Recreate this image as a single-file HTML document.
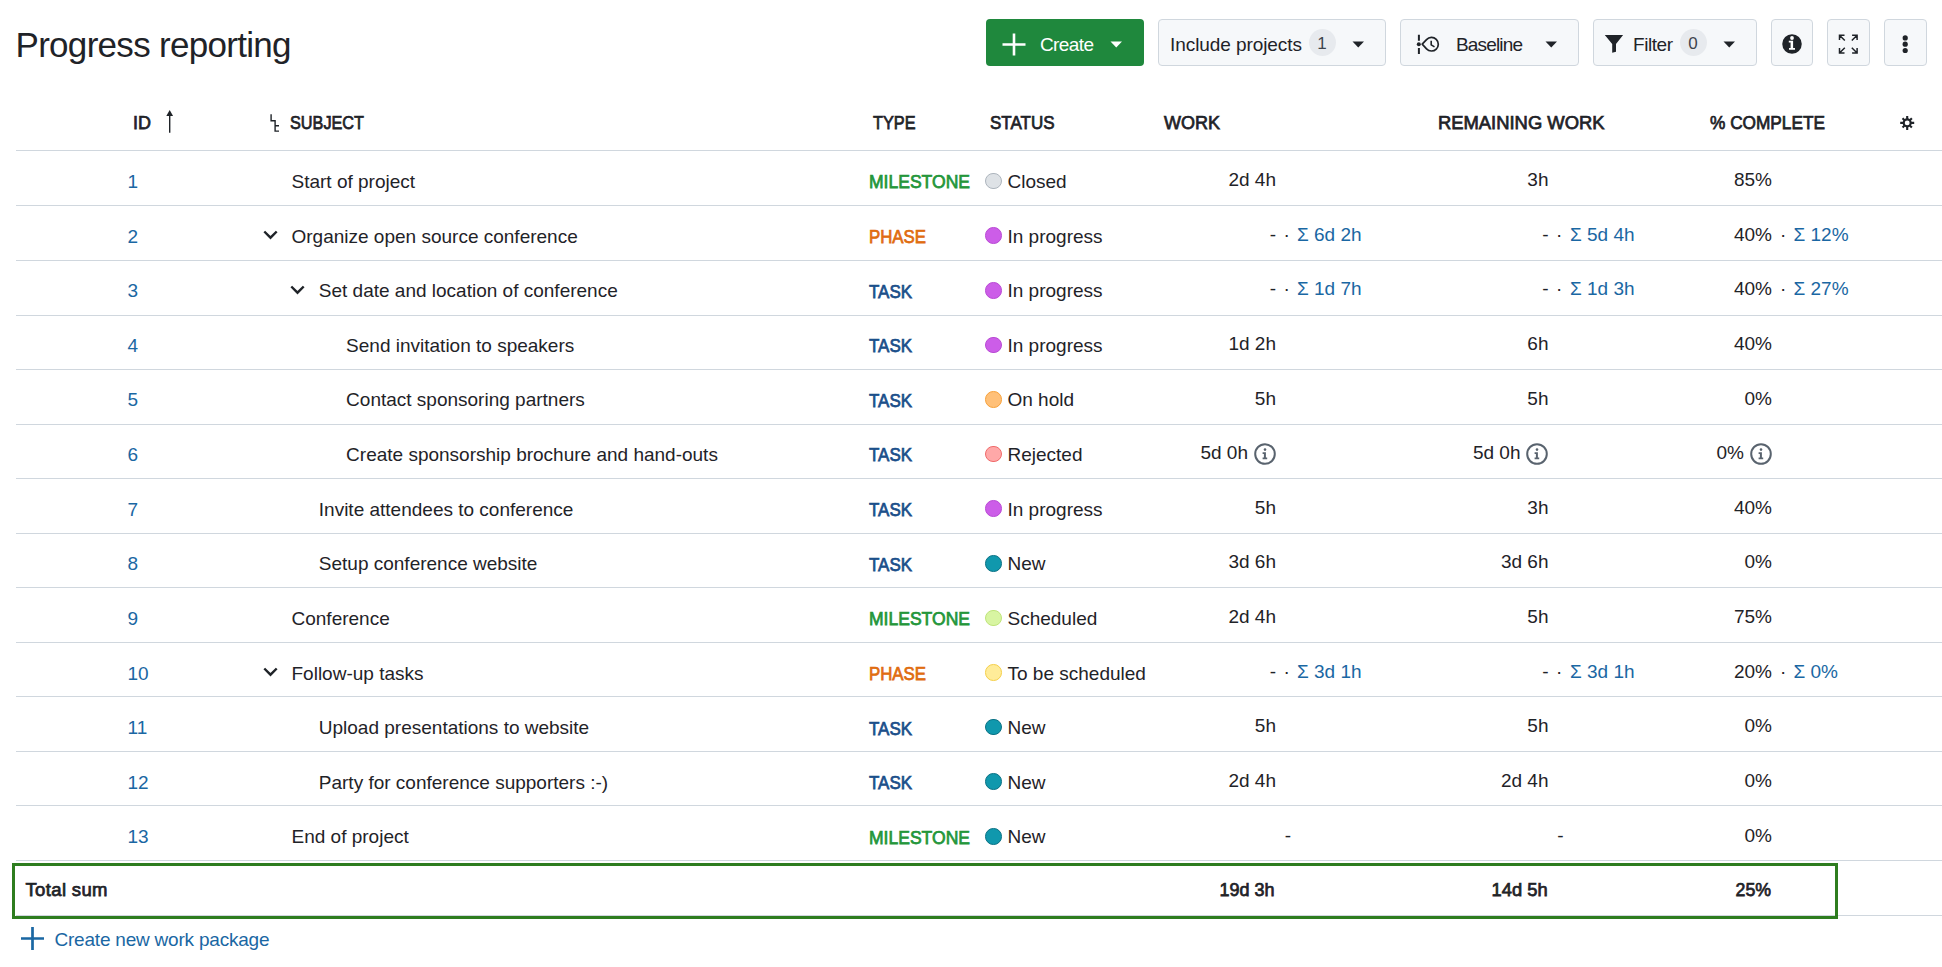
<!DOCTYPE html>
<html><head><meta charset="utf-8"><title>Progress reporting</title>
<style>
html,body{margin:0;padding:0;background:#fff;}
body{width:1942px;height:967px;position:relative;overflow:hidden;font-family:"Liberation Sans",sans-serif;color:#1f2328;}
.t{position:absolute;white-space:nowrap;}
svg{display:block;}
</style></head><body>
<div class="t" style="top:27.37px;font-size:35px;line-height:35px;color:#1f2328;letter-spacing:-0.701px;left:15.50px;">Progress reporting</div>
<div style="position:absolute;left:986px;top:19px;width:158px;height:47px;background:#1f883d;border-radius:4px;"></div>
<svg style="position:absolute;left:1002px;top:33px" width="24" height="23" viewBox="0 0 24 23"><path d="M12 0.5V22.5M0.5 11.5H23.5" stroke="#fff" stroke-width="2.6"/></svg>
<div class="t" style="top:35.41px;font-size:19px;line-height:19px;color:#fff;letter-spacing:-0.606px;left:1040.00px;">Create</div>
<svg style="position:absolute;left:1110px;top:41px" width="13" height="7" viewBox="0 0 13 7"><path d="M0.5 0.6H12L6.25 6.6Z" fill="#fff"/></svg>
<div style="position:absolute;left:1158px;top:19px;width:228px;height:47px;box-sizing:border-box;background:#f6f8fa;border:1.3px solid #d0d7de;border-radius:4px;"></div>
<div class="t" style="top:35.41px;font-size:19px;line-height:19px;color:#1f2328;letter-spacing:-0.072px;left:1170.00px;">Include projects</div>
<div style="position:absolute;left:1308.5px;top:29.0px;width:27px;height:27px;background:#e7eaee;border-radius:50%;"></div>
<div class="t" style="top:35.11px;font-size:17px;line-height:17px;color:#3d444d;left:1317.20px;">1</div>
<svg style="position:absolute;left:1352px;top:41px" width="13" height="7" viewBox="0 0 13 7"><path d="M0.5 0.6H12L6.25 6.6Z" fill="#1f2328"/></svg>
<div style="position:absolute;left:1400px;top:19px;width:179px;height:47px;box-sizing:border-box;background:#f6f8fa;border:1.3px solid #d0d7de;border-radius:4px;"></div>
<svg style="position:absolute;left:1410px;top:28px" width="35" height="32" viewBox="0 0 35 32" ><path d="M8.9 6.8V12.7M8.9 20V26" stroke="#1f2328" stroke-width="2"/><circle cx="8.8" cy="16.2" r="2" fill="#1f2328"/><path d="M12.2 16.2L16.53 11.56A6.8 6.8 0 1 1 16.53 20.84Z" fill="none" stroke="#1f2328" stroke-width="1.7" stroke-linejoin="round"/><path d="M21.2 12.7V16.9L24.5 18.9" fill="none" stroke="#1f2328" stroke-width="1.6"/></svg>
<div class="t" style="top:35.41px;font-size:19px;line-height:19px;color:#1f2328;letter-spacing:-0.841px;left:1456.00px;">Baseline</div>
<svg style="position:absolute;left:1545px;top:41px" width="13" height="7" viewBox="0 0 13 7"><path d="M0.5 0.6H12L6.25 6.6Z" fill="#1f2328"/></svg>
<div style="position:absolute;left:1593px;top:19px;width:164px;height:47px;box-sizing:border-box;background:#f6f8fa;border:1.3px solid #d0d7de;border-radius:4px;"></div>
<svg style="position:absolute;left:1598px;top:28px" width="35" height="32" viewBox="0 0 35 32" ><path d="M6.8 6.9H25.1L18 15.9V23.7L14.2 24.8V15.9Z" fill="#1f2328"/></svg>
<div class="t" style="top:35.41px;font-size:19px;line-height:19px;color:#1f2328;letter-spacing:-0.444px;left:1633.00px;">Filter</div>
<div style="position:absolute;left:1679.5px;top:29.0px;width:27px;height:27px;background:#e7eaee;border-radius:50%;"></div>
<div class="t" style="top:35.11px;font-size:17px;line-height:17px;color:#3d444d;left:1688.20px;">0</div>
<svg style="position:absolute;left:1723px;top:41px" width="13" height="7" viewBox="0 0 13 7"><path d="M0.5 0.6H12L6.25 6.6Z" fill="#1f2328"/></svg>
<div style="position:absolute;left:1771px;top:19px;width:42px;height:47px;box-sizing:border-box;background:#f6f8fa;border:1.3px solid #d0d7de;border-radius:4px;"></div>
<svg style="position:absolute;left:1776px;top:28px" width="32" height="32" viewBox="0 0 32 32" ><circle cx="16" cy="16" r="9.75" fill="#1f2328"/><circle cx="16" cy="10" r="1.9" fill="#fff"/><path d="M12.8 12.7H17.1V19.9H19V21.8H13V19.9H14.6V14.4H12.8Z" fill="#fff"/></svg>
<div style="position:absolute;left:1827px;top:19px;width:43px;height:47px;box-sizing:border-box;background:#f6f8fa;border:1.3px solid #d0d7de;border-radius:4px;"></div>
<svg style="position:absolute;left:1776px;top:28px" width="90" height="32" viewBox="0 0 90 32" ><path d="M63.5 12V7.2H68.5M63.5 7.2L68.8 12.5M81.1 12V7.2H76.1M81.1 7.2L75.8 12.5M63.5 20V25H68.5M63.5 25L68.8 19.7M81.1 20V25H76.1M81.1 25L75.8 19.7" fill="none" stroke="#1f2328" stroke-width="1.5"/></svg>
<div style="position:absolute;left:1884px;top:19px;width:43px;height:47px;box-sizing:border-box;background:#f6f8fa;border:1.3px solid #d0d7de;border-radius:4px;"></div>
<svg style="position:absolute;left:1890px;top:28px" width="30" height="32" viewBox="0 0 30 32" ><circle cx="15.2" cy="9.9" r="2.6" fill="#1f2328"/><circle cx="15.2" cy="16.2" r="2.6" fill="#1f2328"/><circle cx="15.2" cy="22.5" r="2.6" fill="#1f2328"/></svg>
<div class="t" style="top:114.34px;font-size:18.5px;line-height:18.5px;color:#1f2328;-webkit-text-stroke:0.75px #1f2328;transform:scaleX(0.9730);transform-origin:0 0;left:133.00px;">ID</div>
<svg style="position:absolute;left:160px;top:105px" width="20" height="30" viewBox="0 0 20 30" ><path d="M9.7 10V27.8" stroke="#1f2328" stroke-width="1.4"/><path d="M6.3 11L9.7 5L13.1 11Z" fill="#1f2328"/></svg>
<svg style="position:absolute;left:260px;top:110px" width="30" height="25" viewBox="0 0 30 25" ><path d="M11.1 4.2V10.7H15.1V21.1H19M15.1 15.7H19" fill="none" stroke="#1f2328" stroke-width="1.4"/></svg>
<div class="t" style="top:114.34px;font-size:18.5px;line-height:18.5px;color:#1f2328;-webkit-text-stroke:0.75px #1f2328;transform:scaleX(0.8779);transform-origin:0 0;left:289.50px;">SUBJECT</div>
<div class="t" style="top:114.34px;font-size:18.5px;line-height:18.5px;color:#1f2328;-webkit-text-stroke:0.75px #1f2328;transform:scaleX(0.8796);transform-origin:0 0;left:873.00px;">TYPE</div>
<div class="t" style="top:114.34px;font-size:18.5px;line-height:18.5px;color:#1f2328;-webkit-text-stroke:0.75px #1f2328;transform:scaleX(0.9184);transform-origin:0 0;left:990.00px;">STATUS</div>
<div class="t" style="top:114.34px;font-size:18.5px;line-height:18.5px;color:#1f2328;-webkit-text-stroke:0.75px #1f2328;transform:scaleX(0.9731);transform-origin:0 0;left:1164.00px;">WORK</div>
<div class="t" style="top:114.34px;font-size:18.5px;line-height:18.5px;color:#1f2328;-webkit-text-stroke:0.75px #1f2328;transform:scaleX(0.9939);transform-origin:0 0;left:1437.50px;">REMAINING WORK</div>
<div class="t" style="top:114.34px;font-size:18.5px;line-height:18.5px;color:#1f2328;-webkit-text-stroke:0.75px #1f2328;transform:scaleX(0.9323);transform-origin:0 0;left:1710.00px;">% COMPLETE</div>
<svg style="position:absolute;left:1892px;top:108px" width="30" height="30" viewBox="0 0 30 30" ><circle cx="15.2" cy="14.9" r="3.5" fill="none" stroke="#1f2328" stroke-width="2.1"/><path d="M18.70 14.90L22.20 14.90M17.67 17.37L19.87 19.57M15.20 18.40L15.20 21.90M12.73 17.37L10.53 19.57M11.70 14.90L8.20 14.90M12.73 12.43L10.53 10.23M15.20 11.40L15.20 7.90M17.67 12.43L19.87 10.23" stroke="#1f2328" stroke-width="2.1"/></svg>
<div style="position:absolute;left:16px;top:150px;width:1926px;height:1px;background:#d0d7de;"></div>
<div class="t" style="top:171.96px;font-size:19px;line-height:19px;color:#1a67a3;left:127.50px;">1</div>
<div class="t" style="top:171.96px;font-size:19px;line-height:19px;color:#1f2328;left:291.50px;">Start of project</div>
<div class="t" style="top:173.39px;font-size:18.5px;line-height:18.5px;color:#24963a;-webkit-text-stroke:0.75px #24963a;transform:scaleX(0.9477);transform-origin:0 0;left:869.00px;">MILESTONE</div>
<div style="position:absolute;left:985px;top:172.70000000000002px;width:16.6px;height:16.6px;box-sizing:border-box;background:#dee2e6;border:1.3px solid #adb5bd;border-radius:50%;"></div>
<div class="t" style="top:171.96px;font-size:19px;line-height:19px;color:#1f2328;left:1007.50px;">Closed</div>
<div class="t" style="top:170.16px;font-size:19px;line-height:19px;color:#1f2328;right:666.00px;">2d 4h</div>
<div class="t" style="top:170.16px;font-size:19px;line-height:19px;color:#1f2328;right:393.50px;">3h</div>
<div class="t" style="top:170.16px;font-size:19px;line-height:19px;color:#1f2328;right:170.00px;">85%</div>
<div style="position:absolute;left:16px;top:205px;width:1926px;height:1px;background:#d0d7de;"></div>
<div class="t" style="top:226.58px;font-size:19px;line-height:19px;color:#1a67a3;left:127.50px;">2</div>
<svg style="position:absolute;left:262.5px;top:230.01500000000001px" width="15" height="10" viewBox="0 0 15 10"><path d="M1.3 1.5L7.5 7.7L13.7 1.5" fill="none" stroke="#1f2328" stroke-width="2.4"/></svg>
<div class="t" style="top:226.58px;font-size:19px;line-height:19px;color:#1f2328;left:291.50px;">Organize open source conference</div>
<div class="t" style="top:228.00px;font-size:18.5px;line-height:18.5px;color:#e06c10;-webkit-text-stroke:0.75px #e06c10;transform:scaleX(0.9089);transform-origin:0 0;left:869.00px;">PHASE</div>
<div style="position:absolute;left:985px;top:227.31500000000003px;width:16.6px;height:16.6px;box-sizing:border-box;background:#cc5de8;border:1.3px solid #b94ad4;border-radius:50%;"></div>
<div class="t" style="top:226.58px;font-size:19px;line-height:19px;color:#1f2328;left:1007.50px;">In progress</div>
<div class="t" style="top:224.78px;font-size:19px;line-height:19px;color:#1f2328;right:666.00px;">-</div>
<div class="t" style="top:224.78px;font-size:19px;line-height:19px;color:#1f2328;left:1283.50px;">·</div>
<div class="t" style="top:224.78px;font-size:19px;line-height:19px;color:#1a67a3;left:1297.00px;">Σ 6d 2h</div>
<div class="t" style="top:224.78px;font-size:19px;line-height:19px;color:#1f2328;right:393.50px;">-</div>
<div class="t" style="top:224.78px;font-size:19px;line-height:19px;color:#1f2328;left:1556.00px;">·</div>
<div class="t" style="top:224.78px;font-size:19px;line-height:19px;color:#1a67a3;left:1570.00px;">Σ 5d 4h</div>
<div class="t" style="top:224.78px;font-size:19px;line-height:19px;color:#1f2328;right:170.00px;">40%</div>
<div class="t" style="top:224.78px;font-size:19px;line-height:19px;color:#1f2328;left:1780.00px;">·</div>
<div class="t" style="top:224.78px;font-size:19px;line-height:19px;color:#1a67a3;left:1793.50px;">Σ 12%</div>
<div style="position:absolute;left:16px;top:260px;width:1926px;height:1px;background:#d0d7de;"></div>
<div class="t" style="top:281.19px;font-size:19px;line-height:19px;color:#1a67a3;left:127.50px;">3</div>
<svg style="position:absolute;left:289.8px;top:284.63px" width="15" height="10" viewBox="0 0 15 10"><path d="M1.3 1.5L7.5 7.7L13.7 1.5" fill="none" stroke="#1f2328" stroke-width="2.4"/></svg>
<div class="t" style="top:281.19px;font-size:19px;line-height:19px;color:#1f2328;left:318.80px;">Set date and location of conference</div>
<div class="t" style="top:282.62px;font-size:18.5px;line-height:18.5px;color:#1b4f8a;-webkit-text-stroke:0.75px #1b4f8a;transform:scaleX(0.9160);transform-origin:0 0;left:869.00px;">TASK</div>
<div style="position:absolute;left:985px;top:281.93px;width:16.6px;height:16.6px;box-sizing:border-box;background:#cc5de8;border:1.3px solid #b94ad4;border-radius:50%;"></div>
<div class="t" style="top:281.19px;font-size:19px;line-height:19px;color:#1f2328;left:1007.50px;">In progress</div>
<div class="t" style="top:279.39px;font-size:19px;line-height:19px;color:#1f2328;right:666.00px;">-</div>
<div class="t" style="top:279.39px;font-size:19px;line-height:19px;color:#1f2328;left:1283.50px;">·</div>
<div class="t" style="top:279.39px;font-size:19px;line-height:19px;color:#1a67a3;left:1297.00px;">Σ 1d 7h</div>
<div class="t" style="top:279.39px;font-size:19px;line-height:19px;color:#1f2328;right:393.50px;">-</div>
<div class="t" style="top:279.39px;font-size:19px;line-height:19px;color:#1f2328;left:1556.00px;">·</div>
<div class="t" style="top:279.39px;font-size:19px;line-height:19px;color:#1a67a3;left:1570.00px;">Σ 1d 3h</div>
<div class="t" style="top:279.39px;font-size:19px;line-height:19px;color:#1f2328;right:170.00px;">40%</div>
<div class="t" style="top:279.39px;font-size:19px;line-height:19px;color:#1f2328;left:1780.00px;">·</div>
<div class="t" style="top:279.39px;font-size:19px;line-height:19px;color:#1a67a3;left:1793.50px;">Σ 27%</div>
<div style="position:absolute;left:16px;top:315px;width:1926px;height:1px;background:#d0d7de;"></div>
<div class="t" style="top:335.81px;font-size:19px;line-height:19px;color:#1a67a3;left:127.50px;">4</div>
<div class="t" style="top:335.81px;font-size:19px;line-height:19px;color:#1f2328;left:346.10px;">Send invitation to speakers</div>
<div class="t" style="top:337.23px;font-size:18.5px;line-height:18.5px;color:#1b4f8a;-webkit-text-stroke:0.75px #1b4f8a;transform:scaleX(0.9160);transform-origin:0 0;left:869.00px;">TASK</div>
<div style="position:absolute;left:985px;top:336.545px;width:16.6px;height:16.6px;box-sizing:border-box;background:#cc5de8;border:1.3px solid #b94ad4;border-radius:50%;"></div>
<div class="t" style="top:335.81px;font-size:19px;line-height:19px;color:#1f2328;left:1007.50px;">In progress</div>
<div class="t" style="top:334.01px;font-size:19px;line-height:19px;color:#1f2328;right:666.00px;">1d 2h</div>
<div class="t" style="top:334.01px;font-size:19px;line-height:19px;color:#1f2328;right:393.50px;">6h</div>
<div class="t" style="top:334.01px;font-size:19px;line-height:19px;color:#1f2328;right:170.00px;">40%</div>
<div style="position:absolute;left:16px;top:369px;width:1926px;height:1px;background:#d0d7de;"></div>
<div class="t" style="top:390.42px;font-size:19px;line-height:19px;color:#1a67a3;left:127.50px;">5</div>
<div class="t" style="top:390.42px;font-size:19px;line-height:19px;color:#1f2328;left:346.10px;">Contact sponsoring partners</div>
<div class="t" style="top:391.85px;font-size:18.5px;line-height:18.5px;color:#1b4f8a;-webkit-text-stroke:0.75px #1b4f8a;transform:scaleX(0.9160);transform-origin:0 0;left:869.00px;">TASK</div>
<div style="position:absolute;left:985px;top:391.16px;width:16.6px;height:16.6px;box-sizing:border-box;background:#ffc078;border:1.3px solid #f7a13a;border-radius:50%;"></div>
<div class="t" style="top:390.42px;font-size:19px;line-height:19px;color:#1f2328;left:1007.50px;">On hold</div>
<div class="t" style="top:388.62px;font-size:19px;line-height:19px;color:#1f2328;right:666.00px;">5h</div>
<div class="t" style="top:388.62px;font-size:19px;line-height:19px;color:#1f2328;right:393.50px;">5h</div>
<div class="t" style="top:388.62px;font-size:19px;line-height:19px;color:#1f2328;right:170.00px;">0%</div>
<div style="position:absolute;left:16px;top:424px;width:1926px;height:1px;background:#d0d7de;"></div>
<div class="t" style="top:445.04px;font-size:19px;line-height:19px;color:#1a67a3;left:127.50px;">6</div>
<div class="t" style="top:445.04px;font-size:19px;line-height:19px;color:#1f2328;left:346.10px;">Create sponsorship brochure and hand-outs</div>
<div class="t" style="top:446.46px;font-size:18.5px;line-height:18.5px;color:#1b4f8a;-webkit-text-stroke:0.75px #1b4f8a;transform:scaleX(0.9160);transform-origin:0 0;left:869.00px;">TASK</div>
<div style="position:absolute;left:985px;top:445.77500000000003px;width:16.6px;height:16.6px;box-sizing:border-box;background:#ffa8a8;border:1.3px solid #f06a6a;border-radius:50%;"></div>
<div class="t" style="top:445.04px;font-size:19px;line-height:19px;color:#1f2328;left:1007.50px;">Rejected</div>
<div class="t" style="top:443.24px;font-size:19px;line-height:19px;color:#1f2328;right:694.00px;">5d 0h</div>
<svg style="position:absolute;left:1253.5px;top:443.475px" width="22" height="22" viewBox="0 0 22 22"><circle cx="11" cy="11" r="9.8" fill="none" stroke="#59636e" stroke-width="2"/><circle cx="11" cy="6.6" r="1.3" fill="#59636e"/><path d="M8.6 9.3H11.9V14.6H13.2V16.3H8.6V14.6H9.9V11H8.6Z" fill="#59636e"/></svg>
<div class="t" style="top:443.24px;font-size:19px;line-height:19px;color:#1f2328;right:421.50px;">5d 0h</div>
<svg style="position:absolute;left:1526.0px;top:443.475px" width="22" height="22" viewBox="0 0 22 22"><circle cx="11" cy="11" r="9.8" fill="none" stroke="#59636e" stroke-width="2"/><circle cx="11" cy="6.6" r="1.3" fill="#59636e"/><path d="M8.6 9.3H11.9V14.6H13.2V16.3H8.6V14.6H9.9V11H8.6Z" fill="#59636e"/></svg>
<div class="t" style="top:443.24px;font-size:19px;line-height:19px;color:#1f2328;right:198.00px;">0%</div>
<svg style="position:absolute;left:1749.5px;top:443.475px" width="22" height="22" viewBox="0 0 22 22"><circle cx="11" cy="11" r="9.8" fill="none" stroke="#59636e" stroke-width="2"/><circle cx="11" cy="6.6" r="1.3" fill="#59636e"/><path d="M8.6 9.3H11.9V14.6H13.2V16.3H8.6V14.6H9.9V11H8.6Z" fill="#59636e"/></svg>
<div style="position:absolute;left:16px;top:478px;width:1926px;height:1px;background:#d0d7de;"></div>
<div class="t" style="top:499.65px;font-size:19px;line-height:19px;color:#1a67a3;left:127.50px;">7</div>
<div class="t" style="top:499.65px;font-size:19px;line-height:19px;color:#1f2328;left:318.80px;">Invite attendees to conference</div>
<div class="t" style="top:501.08px;font-size:18.5px;line-height:18.5px;color:#1b4f8a;-webkit-text-stroke:0.75px #1b4f8a;transform:scaleX(0.9160);transform-origin:0 0;left:869.00px;">TASK</div>
<div style="position:absolute;left:985px;top:500.39000000000004px;width:16.6px;height:16.6px;box-sizing:border-box;background:#cc5de8;border:1.3px solid #b94ad4;border-radius:50%;"></div>
<div class="t" style="top:499.65px;font-size:19px;line-height:19px;color:#1f2328;left:1007.50px;">In progress</div>
<div class="t" style="top:497.85px;font-size:19px;line-height:19px;color:#1f2328;right:666.00px;">5h</div>
<div class="t" style="top:497.85px;font-size:19px;line-height:19px;color:#1f2328;right:393.50px;">3h</div>
<div class="t" style="top:497.85px;font-size:19px;line-height:19px;color:#1f2328;right:170.00px;">40%</div>
<div style="position:absolute;left:16px;top:533px;width:1926px;height:1px;background:#d0d7de;"></div>
<div class="t" style="top:554.27px;font-size:19px;line-height:19px;color:#1a67a3;left:127.50px;">8</div>
<div class="t" style="top:554.27px;font-size:19px;line-height:19px;color:#1f2328;left:318.80px;">Setup conference website</div>
<div class="t" style="top:555.69px;font-size:18.5px;line-height:18.5px;color:#1b4f8a;-webkit-text-stroke:0.75px #1b4f8a;transform:scaleX(0.9160);transform-origin:0 0;left:869.00px;">TASK</div>
<div style="position:absolute;left:985px;top:555.005px;width:16.6px;height:16.6px;box-sizing:border-box;background:#1098ad;border:1.3px solid #0b7285;border-radius:50%;"></div>
<div class="t" style="top:554.27px;font-size:19px;line-height:19px;color:#1f2328;left:1007.50px;">New</div>
<div class="t" style="top:552.47px;font-size:19px;line-height:19px;color:#1f2328;right:666.00px;">3d 6h</div>
<div class="t" style="top:552.47px;font-size:19px;line-height:19px;color:#1f2328;right:393.50px;">3d 6h</div>
<div class="t" style="top:552.47px;font-size:19px;line-height:19px;color:#1f2328;right:170.00px;">0%</div>
<div style="position:absolute;left:16px;top:587px;width:1926px;height:1px;background:#d0d7de;"></div>
<div class="t" style="top:608.88px;font-size:19px;line-height:19px;color:#1a67a3;left:127.50px;">9</div>
<div class="t" style="top:608.88px;font-size:19px;line-height:19px;color:#1f2328;left:291.50px;">Conference</div>
<div class="t" style="top:610.31px;font-size:18.5px;line-height:18.5px;color:#24963a;-webkit-text-stroke:0.75px #24963a;transform:scaleX(0.9477);transform-origin:0 0;left:869.00px;">MILESTONE</div>
<div style="position:absolute;left:985px;top:609.62px;width:16.6px;height:16.6px;box-sizing:border-box;background:#d8f5a2;border:1.3px solid #bfe47a;border-radius:50%;"></div>
<div class="t" style="top:608.88px;font-size:19px;line-height:19px;color:#1f2328;left:1007.50px;">Scheduled</div>
<div class="t" style="top:607.08px;font-size:19px;line-height:19px;color:#1f2328;right:666.00px;">2d 4h</div>
<div class="t" style="top:607.08px;font-size:19px;line-height:19px;color:#1f2328;right:393.50px;">5h</div>
<div class="t" style="top:607.08px;font-size:19px;line-height:19px;color:#1f2328;right:170.00px;">75%</div>
<div style="position:absolute;left:16px;top:642px;width:1926px;height:1px;background:#d0d7de;"></div>
<div class="t" style="top:663.50px;font-size:19px;line-height:19px;color:#1a67a3;left:127.50px;">10</div>
<svg style="position:absolute;left:262.5px;top:666.9350000000001px" width="15" height="10" viewBox="0 0 15 10"><path d="M1.3 1.5L7.5 7.7L13.7 1.5" fill="none" stroke="#1f2328" stroke-width="2.4"/></svg>
<div class="t" style="top:663.50px;font-size:19px;line-height:19px;color:#1f2328;left:291.50px;">Follow-up tasks</div>
<div class="t" style="top:664.92px;font-size:18.5px;line-height:18.5px;color:#e06c10;-webkit-text-stroke:0.75px #e06c10;transform:scaleX(0.9089);transform-origin:0 0;left:869.00px;">PHASE</div>
<div style="position:absolute;left:985px;top:664.235px;width:16.6px;height:16.6px;box-sizing:border-box;background:#ffec99;border:1.3px solid #f5cf4a;border-radius:50%;"></div>
<div class="t" style="top:663.50px;font-size:19px;line-height:19px;color:#1f2328;left:1007.50px;">To be scheduled</div>
<div class="t" style="top:661.70px;font-size:19px;line-height:19px;color:#1f2328;right:666.00px;">-</div>
<div class="t" style="top:661.70px;font-size:19px;line-height:19px;color:#1f2328;left:1283.50px;">·</div>
<div class="t" style="top:661.70px;font-size:19px;line-height:19px;color:#1a67a3;left:1297.00px;">Σ 3d 1h</div>
<div class="t" style="top:661.70px;font-size:19px;line-height:19px;color:#1f2328;right:393.50px;">-</div>
<div class="t" style="top:661.70px;font-size:19px;line-height:19px;color:#1f2328;left:1556.00px;">·</div>
<div class="t" style="top:661.70px;font-size:19px;line-height:19px;color:#1a67a3;left:1570.00px;">Σ 3d 1h</div>
<div class="t" style="top:661.70px;font-size:19px;line-height:19px;color:#1f2328;right:170.00px;">20%</div>
<div class="t" style="top:661.70px;font-size:19px;line-height:19px;color:#1f2328;left:1780.00px;">·</div>
<div class="t" style="top:661.70px;font-size:19px;line-height:19px;color:#1a67a3;left:1793.50px;">Σ 0%</div>
<div style="position:absolute;left:16px;top:696px;width:1926px;height:1px;background:#d0d7de;"></div>
<div class="t" style="top:718.11px;font-size:19px;line-height:19px;color:#1a67a3;left:127.50px;">11</div>
<div class="t" style="top:718.11px;font-size:19px;line-height:19px;color:#1f2328;left:318.80px;">Upload presentations to website</div>
<div class="t" style="top:719.54px;font-size:18.5px;line-height:18.5px;color:#1b4f8a;-webkit-text-stroke:0.75px #1b4f8a;transform:scaleX(0.9160);transform-origin:0 0;left:869.00px;">TASK</div>
<div style="position:absolute;left:985px;top:718.8499999999999px;width:16.6px;height:16.6px;box-sizing:border-box;background:#1098ad;border:1.3px solid #0b7285;border-radius:50%;"></div>
<div class="t" style="top:718.11px;font-size:19px;line-height:19px;color:#1f2328;left:1007.50px;">New</div>
<div class="t" style="top:716.31px;font-size:19px;line-height:19px;color:#1f2328;right:666.00px;">5h</div>
<div class="t" style="top:716.31px;font-size:19px;line-height:19px;color:#1f2328;right:393.50px;">5h</div>
<div class="t" style="top:716.31px;font-size:19px;line-height:19px;color:#1f2328;right:170.00px;">0%</div>
<div style="position:absolute;left:16px;top:751px;width:1926px;height:1px;background:#d0d7de;"></div>
<div class="t" style="top:772.73px;font-size:19px;line-height:19px;color:#1a67a3;left:127.50px;">12</div>
<div class="t" style="top:772.73px;font-size:19px;line-height:19px;color:#1f2328;left:318.80px;">Party for conference supporters :-)</div>
<div class="t" style="top:774.15px;font-size:18.5px;line-height:18.5px;color:#1b4f8a;-webkit-text-stroke:0.75px #1b4f8a;transform:scaleX(0.9160);transform-origin:0 0;left:869.00px;">TASK</div>
<div style="position:absolute;left:985px;top:773.4649999999999px;width:16.6px;height:16.6px;box-sizing:border-box;background:#1098ad;border:1.3px solid #0b7285;border-radius:50%;"></div>
<div class="t" style="top:772.73px;font-size:19px;line-height:19px;color:#1f2328;left:1007.50px;">New</div>
<div class="t" style="top:770.93px;font-size:19px;line-height:19px;color:#1f2328;right:666.00px;">2d 4h</div>
<div class="t" style="top:770.93px;font-size:19px;line-height:19px;color:#1f2328;right:393.50px;">2d 4h</div>
<div class="t" style="top:770.93px;font-size:19px;line-height:19px;color:#1f2328;right:170.00px;">0%</div>
<div style="position:absolute;left:16px;top:805px;width:1926px;height:1px;background:#d0d7de;"></div>
<div class="t" style="top:827.34px;font-size:19px;line-height:19px;color:#1a67a3;left:127.50px;">13</div>
<div class="t" style="top:827.34px;font-size:19px;line-height:19px;color:#1f2328;left:291.50px;">End of project</div>
<div class="t" style="top:828.77px;font-size:18.5px;line-height:18.5px;color:#24963a;-webkit-text-stroke:0.75px #24963a;transform:scaleX(0.9477);transform-origin:0 0;left:869.00px;">MILESTONE</div>
<div style="position:absolute;left:985px;top:828.0799999999999px;width:16.6px;height:16.6px;box-sizing:border-box;background:#1098ad;border:1.3px solid #0b7285;border-radius:50%;"></div>
<div class="t" style="top:827.34px;font-size:19px;line-height:19px;color:#1f2328;left:1007.50px;">New</div>
<div class="t" style="top:825.54px;font-size:19px;line-height:19px;color:#1f2328;right:651.00px;">-</div>
<div class="t" style="top:825.54px;font-size:19px;line-height:19px;color:#1f2328;right:378.50px;">-</div>
<div class="t" style="top:825.54px;font-size:19px;line-height:19px;color:#1f2328;right:170.00px;">0%</div>
<div style="position:absolute;left:16px;top:860px;width:1926px;height:1px;background:#d0d7de;"></div>
<div style="position:absolute;left:16px;top:915px;width:1926px;height:1px;background:#d0d7de;"></div>
<div style="position:absolute;left:12px;top:863px;width:1826px;height:56px;box-sizing:border-box;border:3px solid #2e7d1f;"></div>
<div class="t" style="top:881.34px;font-size:18.5px;line-height:18.5px;color:#1f2328;-webkit-text-stroke:0.75px #1f2328;letter-spacing:0.354px;left:25.50px;">Total sum</div>
<div class="t" style="top:881.34px;font-size:18.5px;line-height:18.5px;color:#1f2328;-webkit-text-stroke:0.75px #1f2328;transform:scaleX(0.9720);transform-origin:100% 0;right:667.00px;">19d 3h</div>
<div class="t" style="top:881.34px;font-size:18.5px;line-height:18.5px;color:#1f2328;-webkit-text-stroke:0.75px #1f2328;transform:scaleX(0.9897);transform-origin:100% 0;right:394.00px;">14d 5h</div>
<div class="t" style="top:881.34px;font-size:18.5px;line-height:18.5px;color:#1f2328;-webkit-text-stroke:0.75px #1f2328;transform:scaleX(0.9588);transform-origin:100% 0;right:170.50px;">25%</div>
<svg style="position:absolute;left:21px;top:927px" width="23" height="23" viewBox="0 0 23 23"><path d="M11.5 0V23M0 11.5H23" stroke="#1a67a3" stroke-width="2.7"/></svg>
<div class="t" style="top:929.91px;font-size:19px;line-height:19px;color:#1a67a3;letter-spacing:-0.212px;left:54.50px;">Create new work package</div>
</body></html>
